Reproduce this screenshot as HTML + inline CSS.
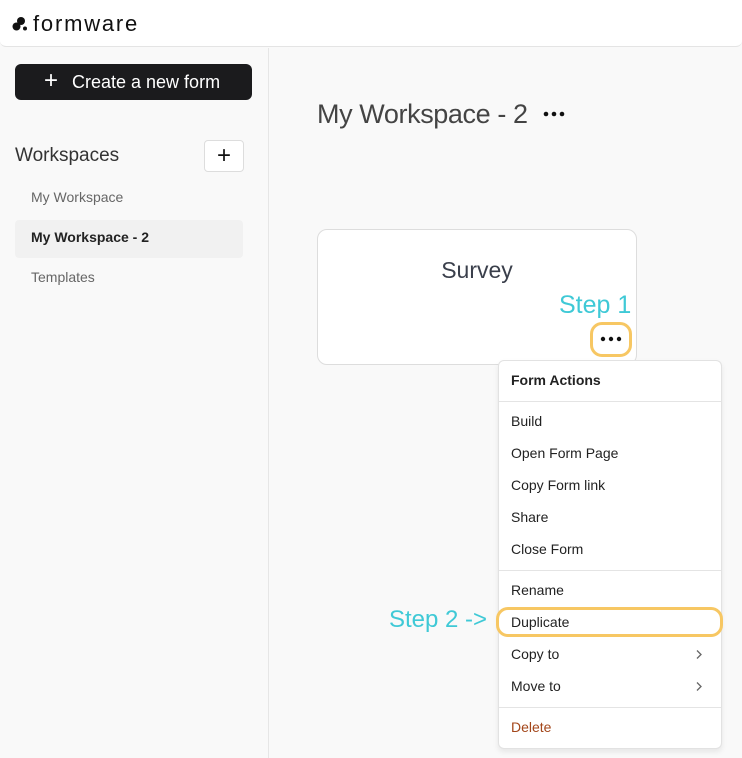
<!DOCTYPE html>
<html><head><style>
*{margin:0;padding:0;box-sizing:border-box}
body{width:742px;height:758px;overflow:hidden;background:#f9f9f9;font-family:"Liberation Sans",sans-serif;position:relative;color:#222}
.a{position:absolute;white-space:nowrap}
</style></head><body>
<div class="a" style="left:0;top:0;width:742px;height:47px;background:#fff;border-bottom:1px solid #e4e4e4;border-radius:0 0 6px 6px"></div>
<svg class="a" style="left:12px;top:16px" width="16" height="16" viewBox="0 0 16 16"><circle cx="9" cy="5" r="4" fill="#111"/><circle cx="4.5" cy="10.5" r="4" fill="#111"/><circle cx="13" cy="12.5" r="2" fill="#111"/></svg>
<div class="a" style="left:33px;top:11px;font-size:22px;letter-spacing:1.8px;color:#111">formware</div>
<div class="a" style="left:268px;top:48px;width:1px;height:710px;background:#e6e6e6"></div>
<div class="a" style="left:15px;top:64px;width:237px;height:36px;background:#1b1b1d;border-radius:6px;color:#fff;font-size:18px;line-height:36px;padding-left:30px"><span style="font-size:24px;font-weight:300;position:absolute;left:29px;top:-1px">+</span><span style="margin-left:27px">Create a new form</span></div>
<div class="a" style="left:15px;top:145px;font-size:19px;color:#333">Workspaces</div>
<div class="a" style="left:204px;top:140px;width:40px;height:32px;border:1px solid #ddd;border-radius:4px;background:#fff;text-align:center;font-size:24px;line-height:29px;color:#111">+</div>
<div class="a" style="left:31px;top:189px;font-size:14px;color:#666">My Workspace</div>
<div class="a" style="left:15px;top:220px;width:228px;height:38px;background:#f1f1f1;border-radius:4px"></div>
<div class="a" style="left:31px;top:229px;font-size:14px;font-weight:bold;color:#222">My Workspace - 2</div>
<div class="a" style="left:31px;top:269px;font-size:14px;color:#666">Templates</div>
<div class="a" style="left:317px;top:99px;font-size:27px;letter-spacing:-0.4px;color:#444">My Workspace - 2</div>
<svg class="a" style="left:543px;top:110px" width="22" height="8"><circle cx="3" cy="4" r="2.3" fill="#111"/><circle cx="11" cy="4" r="2.3" fill="#111"/><circle cx="19" cy="4" r="2.3" fill="#111"/></svg>
<div class="a" style="left:317px;top:229px;width:320px;height:136px;background:#fff;border:1px solid #ddd;border-radius:10px"></div>
<div class="a" style="left:317px;top:257px;width:320px;text-align:center;font-size:23px;color:#3a3f4b">Survey</div>
<div class="a" style="left:559px;top:291px;font-size:25px;color:#3fc9d6">Step 1</div>
<div class="a" style="left:590px;top:322px;width:42px;height:35px;border:3px solid #f7c763;border-radius:12px"></div>
<svg class="a" style="left:600px;top:335px" width="22" height="8"><circle cx="3" cy="4" r="2.2" fill="#111"/><circle cx="11" cy="4" r="2.2" fill="#111"/><circle cx="19" cy="4" r="2.2" fill="#111"/></svg>
<div class="a" style="left:498px;top:360px;width:224px;height:389px;background:#fff;border:1px solid #e2e2e2;border-radius:6px;box-shadow:0 3px 6px rgba(0,0,0,.08)"></div>
<div class="a" style="left:511px;top:372px;font-size:14px;font-weight:bold">Form Actions</div>
<div class="a" style="left:499px;top:401px;width:222px;height:1px;background:#e4e4e4"></div>
<div class="a" style="left:511px;top:405px;font-size:14px;line-height:32px">Build<br>Open Form Page<br>Copy Form link<br>Share<br>Close Form</div>
<div class="a" style="left:499px;top:570px;width:222px;height:1px;background:#e4e4e4"></div>
<div class="a" style="left:511px;top:574px;font-size:14px;line-height:32px">Rename<br>Duplicate<br>Copy to<br>Move to</div>
<svg class="a" style="left:695px;top:649px" width="8" height="11"><path d="M2 1.5l4 4-4 4" fill="none" stroke="#666" stroke-width="1.3"/></svg>
<svg class="a" style="left:695px;top:681px" width="8" height="11"><path d="M2 1.5l4 4-4 4" fill="none" stroke="#666" stroke-width="1.3"/></svg>
<div class="a" style="left:499px;top:707px;width:222px;height:1px;background:#e4e4e4"></div>
<div class="a" style="left:511px;top:719px;font-size:14px;color:#a3461a">Delete</div>
<div class="a" style="left:496px;top:607px;width:227px;height:30px;border:3px solid #f7c763;border-radius:12px"></div>
<div class="a" style="left:389px;top:606px;font-size:24px;color:#3fc9d6">Step 2 -&gt;</div>
</body></html>
